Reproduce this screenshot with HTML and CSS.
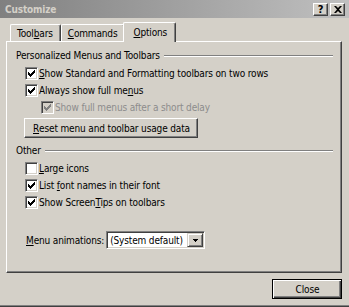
FILE: index.html
```html
<!DOCTYPE html>
<html>
<head>
<meta charset="utf-8">
<link rel="stylesheet" href="styles.css">
</head>
<body>
<div class="window">
  <div class="titlebar">
    <span class="title">Customize</span>
    <div class="caption-btns">
      <span class="cbtn">?</span>
      <span class="cbtn"><svg width="8" height="7" viewBox="0 0 8 7"><path d="M0 0h2l2 2 2-2h2L5 3.5 8 7H6L4 5 2 7H0l3-3.5z" fill="#000"/></svg></span>
    </div>
  </div>
  <div class="main">
    <div class="tabs">
      <div class="tab">Tool<u>b</u>ars</div>
      <div class="tab"><u>C</u>ommands</div>
      <div class="tab active"><u>O</u>ptions</div>
    </div>
    <div class="panel">
      <div class="group-title"><span>Personalized Menus and Toolbars</span><i class="groove"></i></div>
      <div class="check lvl1"><span class="box"><svg class="mark" width="11" height="11" viewBox="1 1 11 11"><path d="M3 5h1v3H3zM4 6h1v3H4zM5 7h1v3H5zM6 6h1v3H6zM7 5h1v3H7zM8 4h1v3H8zM9 3h1v3H9z"/></svg></span><span><u>S</u>how Standard and Formatting toolbars on two rows</span></div>
      <div class="check lvl1"><span class="box"><svg class="mark" width="11" height="11" viewBox="1 1 11 11"><path d="M3 5h1v3H3zM4 6h1v3H4zM5 7h1v3H5zM6 6h1v3H6zM7 5h1v3H7zM8 4h1v3H8zM9 3h1v3H9z"/></svg></span><span>Always show full me<u>n</u>us</span></div>
      <div class="check lvl2 disabled"><span class="box"><svg class="mark" width="11" height="11" viewBox="1 1 11 11"><path d="M3 5h1v3H3zM4 6h1v3H4zM5 7h1v3H5zM6 6h1v3H6zM7 5h1v3H7zM8 4h1v3H8zM9 3h1v3H9z"/></svg></span><span>Show full menus after a short delay</span></div>
      <div class="btn-row"><span class="btn"><u>R</u>eset menu and toolbar usage data</span></div>
      <div class="group-title other"><span>Other</span><i class="groove"></i></div>
      <div class="check lvl1"><span class="box"></span><span><u>L</u>arge icons</span></div>
      <div class="check lvl1"><span class="box"><svg class="mark" width="11" height="11" viewBox="1 1 11 11"><path d="M3 5h1v3H3zM4 6h1v3H4zM5 7h1v3H5zM6 6h1v3H6zM7 5h1v3H7zM8 4h1v3H8zM9 3h1v3H9z"/></svg></span><span>List <u>f</u>ont names in their font</span></div>
      <div class="check lvl1"><span class="box"><svg class="mark" width="11" height="11" viewBox="1 1 11 11"><path d="M3 5h1v3H3zM4 6h1v3H4zM5 7h1v3H5zM6 6h1v3H6zM7 5h1v3H7zM8 4h1v3H8zM9 3h1v3H9z"/></svg></span><span>Show Screen<u>T</u>ips on toolbars</span></div>
      <div class="combo-row">
        <span class="combo-label"><u>M</u>enu animations:</span>
        <div class="combo">
          <span class="combo-text">(System default)</span>
          <span class="drop"><svg width="5" height="3" viewBox="0 0 5 3"><path d="M0 0h5v1H0zM1 1h3v1H1zM2 2h1v1H2z" fill="#000"/></svg></span>
        </div>
      </div>
    </div>
    <div class="footer"><span class="btn default">Close</span></div>
  </div>
</div>
</body>
</html>
```
FILE: styles.css
```css
* { box-sizing: border-box; }
html, body { margin: 0; padding: 0; }
body {
  width: 349px;
  height: 307px;
  background: #d4d0c8;
  font-family: "DejaVu Sans Condensed", "DejaVu Sans", sans-serif;
  font-size: 10px;
  letter-spacing: -0.15px;
  color: #000;
  overflow: hidden;
}
u { text-decoration: underline; text-underline-offset: 1px; }
.window {
  width: 349px;
  height: 307px;
  display: flex;
  flex-direction: column;
  border-bottom: 1px solid #404040;
  box-shadow: inset 0 -1px #808080;
}
.titlebar {
  height: 18px;
  flex: none;
  display: flex;
  align-items: center;
  justify-content: space-between;
  padding: 0 4px 0 5px;
  background: linear-gradient(to right, #808080, #c0c0c0);
}
.title { color: #d4d0c8; font-weight: bold; font-size: 10px; }
.caption-btns { display: flex; gap: 2px; }
.cbtn {
  width: 15px;
  height: 13px;
  background: #d4d0c8;
  border: 1px solid;
  border-color: #fff #404040 #404040 #fff;
  box-shadow: inset -1px -1px #808080;
  display: flex;
  align-items: center;
  justify-content: center;
  font-weight: bold;
  font-size: 11px;
  line-height: 1;
}
.main {
  flex: 1;
  display: flex;
  flex-direction: column;
  padding: 4px 7px 0 6px;
}
.tabs {
  display: flex;
  align-items: flex-end;
  height: 19px;
  padding-left: 4px;
  flex: none;
}
.tab {
  height: 17px;
  padding: 0 7px 0 6px;
  border-top: 1px solid #fff;
  border-left: 1px solid #fff;
  border-right: 1px solid #404040;
  box-shadow: inset -1px 0 #808080;
  border-radius: 2px 2px 0 0;
  display: flex;
  align-items: center;
  background: #d4d0c8;
}
.tab.active {
  height: 20px;
  margin: 0 -2px -1px;
  padding: 0 8px 0 9px;
  position: relative;
  z-index: 1;
}
.panel {
  height: 232px;
  flex: none;
  border: 1px solid;
  border-color: #fff #404040 #404040 #fff;
  box-shadow: inset -1px -1px #808080;
  padding: 7px 8px 0 9px;
  display: flex;
  flex-direction: column;
}
.group-title {
  height: 13px;
  display: flex;
  align-items: center;
}
.groove {
  flex: 1;
  height: 2px;
  margin-left: 4px;
  border-top: 1px solid #808080;
  border-bottom: 1px solid #fff;
}
.group-title + .check { margin-top: 3px; }
.group-title.other { margin-top: 6px; }
.check {
  height: 17px;
  display: flex;
  align-items: center;
  gap: 1px;
}
.lvl1 { margin-left: 9px; }
.lvl2 { margin-left: 25px; }
.box {
  width: 13px;
  height: 13px;
  flex: none;
  border: 1px solid;
  border-color: #808080 #fff #fff #808080;
  box-shadow: inset 1px 1px #404040, inset -1px -1px #d4d0c8;
  background: #fff;
  display: flex;
}
.mark { fill: #000; }
.disabled { color: #8c8c8c; }
.disabled .box { background: #d4d0c8; }
.disabled .mark { fill: #808080; }
.btn-row { margin: 2px 0 0 8px; display: flex; }
.btn {
  height: 20px;
  padding: 0 7px 0 8px;
  display: flex;
  align-items: center;
  justify-content: center;
  border: 1px solid;
  border-color: #fff #404040 #404040 #fff;
  box-shadow: inset -1px -1px #808080;
  background: #d4d0c8;
}
.combo-row {
  margin: 20px 0 0 10px;
  display: flex;
  align-items: center;
  gap: 2px;
}
.combo {
  width: 99px;
  height: 18px;
  display: flex;
  align-items: center;
  border: 1px solid;
  border-color: #808080 #fff #fff #808080;
  box-shadow: inset 1px 1px #404040, inset -1px -1px #d4d0c8;
  background: #fff;
  padding: 1px;
}
.combo-text { flex: 1; padding-left: 2px; white-space: nowrap; overflow: hidden; }
.drop {
  width: 16px;
  height: 14px;
  flex: none;
  display: flex;
  align-items: center;
  justify-content: center;
  background: #d4d0c8;
  border: 1px solid;
  border-color: #d4d0c8 #404040 #404040 #d4d0c8;
  box-shadow: inset 1px 1px #fff, inset -1px -1px #808080;
}
.footer {
  display: flex;
  justify-content: flex-end;
  margin-top: 6px;
}
.btn.default {
  width: 70px;
  border: 1px solid #000;
  box-shadow: inset 1px 1px #fff, inset -1px -1px #404040, inset -2px -2px #808080;
}
```
